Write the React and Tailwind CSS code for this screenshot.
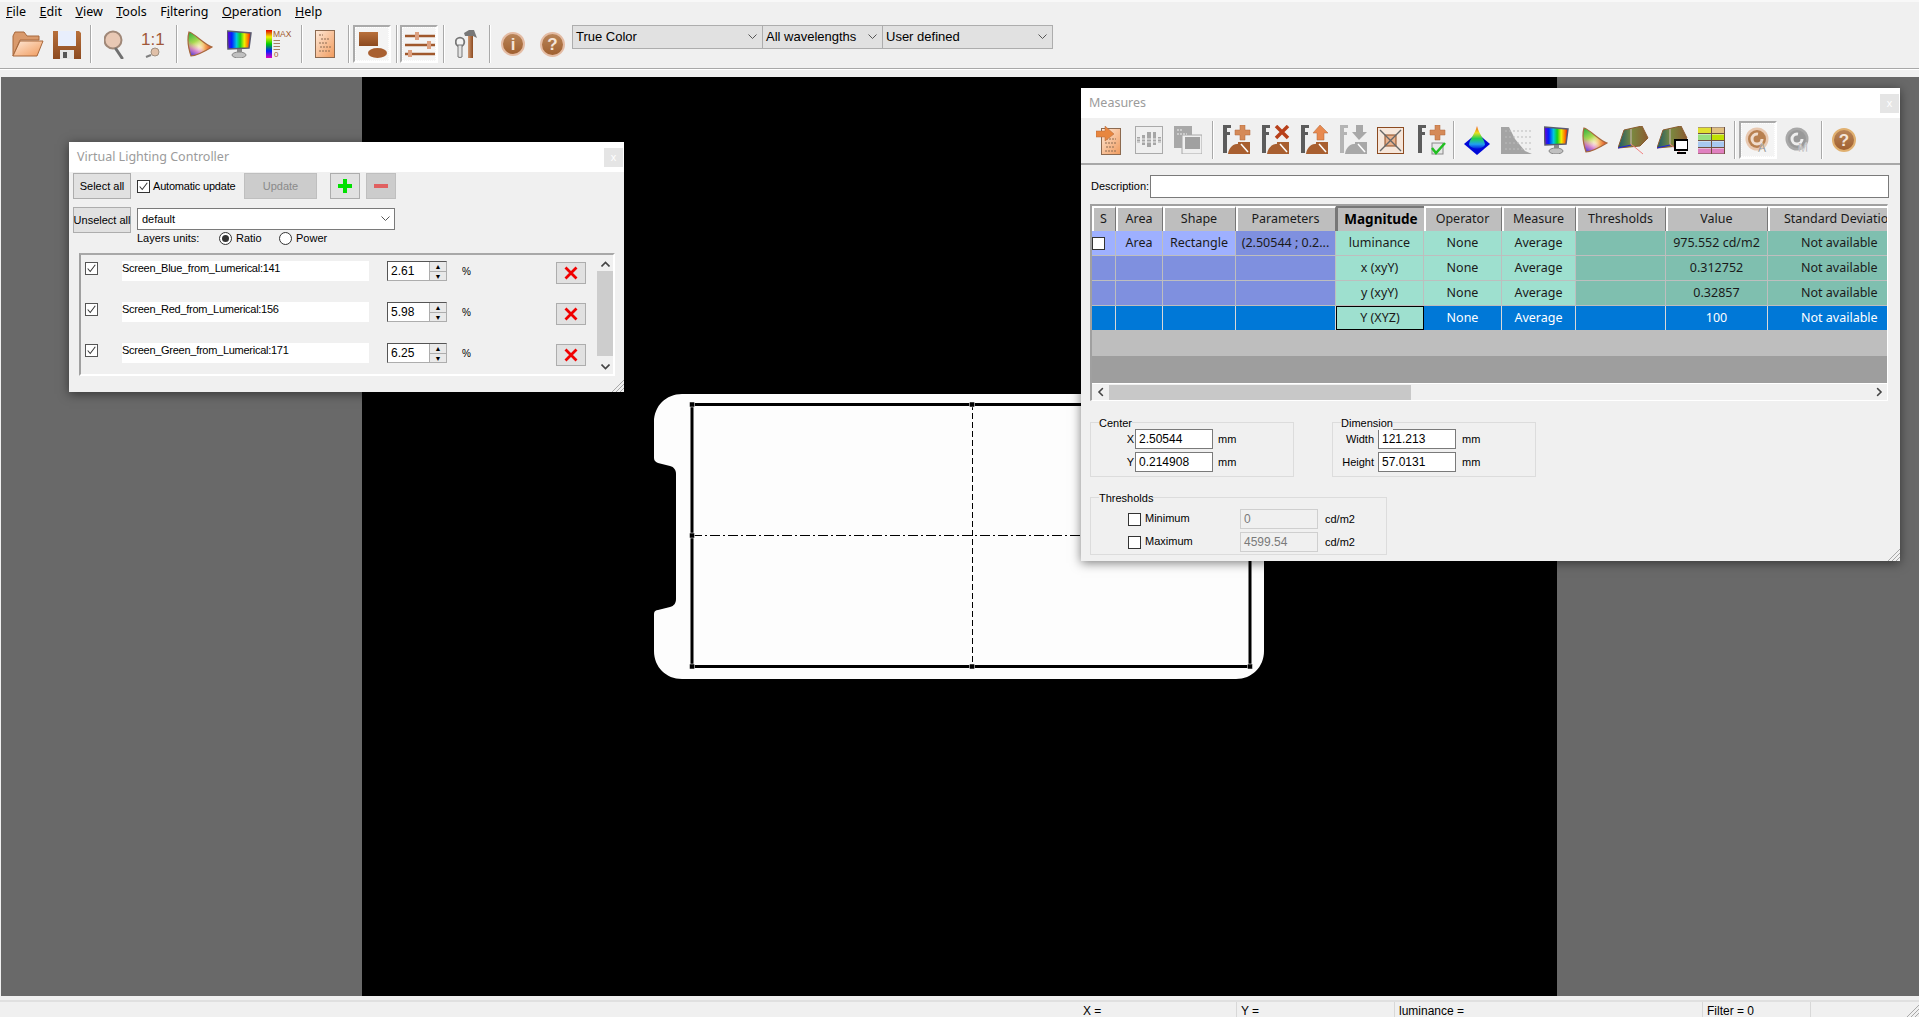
import React from "react";

const UI = "font-['Noto_Sans','Open_Sans',sans-serif]";
const ARIAL = "font-['Liberation_Sans',Arial,sans-serif]";

const Sep = () => <div className="w-[2px] h-[38px] bg-[#a9a9a9] border-r border-white shrink-0" />;

// shared gradients for the toolbar drawings
const GradientDefs = () => (
  <svg className="absolute w-0 h-0">
    <defs>
      <linearGradient id="peach" x1="0" y1="0" x2="1" y2="1">
        <stop offset="0" stopColor="#ffe9d8" />
        <stop offset="1" stopColor="#f09a5c" />
      </linearGradient>
      <linearGradient id="rust" x1="0" y1="0" x2="0" y2="1">
        <stop offset="0" stopColor="#b8703c" />
        <stop offset="1" stopColor="#8c4a20" />
      </linearGradient>
      <linearGradient id="spectrum" x1="0" y1="0" x2="1" y2="0">
        <stop offset="0" stopColor="#7a00c8" />
        <stop offset="0.2" stopColor="#0020ff" />
        <stop offset="0.4" stopColor="#00c8e0" />
        <stop offset="0.55" stopColor="#10d020" />
        <stop offset="0.72" stopColor="#f0f000" />
        <stop offset="0.88" stopColor="#ff7000" />
        <stop offset="1" stopColor="#e00000" />
      </linearGradient>
      <linearGradient id="vspectrum" x1="0" y1="0" x2="0" y2="1">
        <stop offset="0" stopColor="#e00000" />
        <stop offset="0.25" stopColor="#f0f000" />
        <stop offset="0.5" stopColor="#00d000" />
        <stop offset="0.75" stopColor="#0020ff" />
        <stop offset="1" stopColor="#e000c0" />
      </linearGradient>
      <linearGradient id="triG" x1="0.1" y1="0" x2="0.5" y2="0.7">
        <stop offset="0" stopColor="#30b040" />
        <stop offset="0.55" stopColor="#a8d850" />
        <stop offset="1" stopColor="#e8e060" stopOpacity="0" />
      </linearGradient>
      <linearGradient id="triR" x1="1" y1="0.62" x2="0.45" y2="0.6">
        <stop offset="0" stopColor="#d83020" />
        <stop offset="0.5" stopColor="#f09030" stopOpacity="0.8" />
        <stop offset="1" stopColor="#f0c040" stopOpacity="0" />
      </linearGradient>
      <linearGradient id="triB" x1="0.15" y1="1" x2="0.4" y2="0.55">
        <stop offset="0" stopColor="#3838d0" />
        <stop offset="0.5" stopColor="#c050c0" stopOpacity="0.7" />
        <stop offset="1" stopColor="#e080c0" stopOpacity="0" />
      </linearGradient>
      <linearGradient id="gamut3d" x1="0" y1="0" x2="1" y2="0">
        <stop offset="0" stopColor="#1a5a6a" />
        <stop offset="0.45" stopColor="#7a8a40" />
        <stop offset="1" stopColor="#8a5a30" />
      </linearGradient>
      <linearGradient id="cone" x1="0" y1="0" x2="0" y2="1">
        <stop offset="0" stopColor="#f05010" />
        <stop offset="0.3" stopColor="#e8e020" />
        <stop offset="0.55" stopColor="#20d050" />
        <stop offset="0.8" stopColor="#20a0f0" />
        <stop offset="1" stopColor="#0020e0" />
      </linearGradient>
      <linearGradient id="handle" x1="0" y1="0" x2="1" y2="0">
        <stop offset="0" stopColor="#d09870" />
        <stop offset="1" stopColor="#8c4a20" />
      </linearGradient>
    </defs>
  </svg>
);

const Svg = ({ w, h, children, className = "" }) => (
  <svg width={w} height={h} viewBox={`0 0 ${w} ${h}`} className={`shrink-0 ${className}`}>
    {children}
  </svg>
);

const FolderIcon = () => (
  <Svg w={32} h={26}>
    <path d="M1 25 L1 5 L3 1 L12 1 L15 5 L27 5 L27 9 L8 9 Z" fill="#d99a6c" stroke="#a8683c" />
    <path d="M1 25 L8 10 L31 10 L25 25 Z" fill="url(#peach)" stroke="#a8683c" />
  </Svg>
);
const SaveIcon = () => (
  <Svg w={28} h={29}>
    <path d="M0 1 H26 L28 3 V29 H0 Z" fill="url(#rust)" />
    <rect x="5" y="1" width="18" height="15" fill="#e8eefc" />
    <rect x="7" y="20" width="14" height="9" fill="#e6e6e6" />
    <rect x="10" y="22" width="4" height="6" fill="#555" />
  </Svg>
);
const LensIcon = () => (
  <Svg w={20} h={29}>
    <circle cx="9" cy="10" r="8.5" fill="#e8c8b4" stroke="#a08878" strokeWidth="2" />
    <path d="M12 19 L18 28" stroke="#707070" strokeWidth="3" strokeLinecap="round" />
  </Svg>
);
const OneOneIcon = () => (
  <Svg w={24} h={27}>
    <text x="0" y="14" fontSize="17" fill="#a0583a" fontFamily="Liberation Sans, sans-serif">1:1</text>
    <circle cx="14" cy="21" r="4" fill="#e0c0a8" stroke="#a09080" />
    <path d="M10 24 L5 26" stroke="#808080" strokeWidth="2" />
  </Svg>
);
const GamutTriangle = () => {
  const d = "M3 1 C8 2 19 14 26 16 C16 22 9 25 5 25 C2 16 1 8 3 1 Z";
  return (
    <Svg w={27} h={26}>
      <path d={d} fill="#fff8f0" />
      <path d={d} fill="url(#triG)" />
      <path d={d} fill="url(#triR)" />
      <path d={d} fill="url(#triB)" />
      <path d={d} fill="none" stroke="#a8683c" strokeWidth="1.2" />
    </Svg>
  );
};
const MonitorIcon = () => (
  <Svg w={25} h={28}>
    <path d="M0 1 L24 3 L22 18 L1 19 Z" fill="url(#spectrum)" stroke="#5a5a70" strokeWidth="1.5" />
    <rect x="10" y="19" width="5" height="3" fill="#888" />
    <ellipse cx="12" cy="25" rx="7" ry="3" fill="#c0c0c0" stroke="#888" />
  </Svg>
);
const MaxIcon = () => (
  <Svg w={28} h={28}>
    <rect x="0" y="0" width="6" height="28" fill="url(#vspectrum)" />
    <text x="7" y="7" fontSize="8.5" fill="#a0582c" fontFamily="Liberation Sans, sans-serif">MAX</text>
    <path d="M7.5 10.5 H14 M7.5 13.5 H14 M7.5 16.5 H14 M7.5 19.5 H14" stroke="#a88060" />
    <text x="8" y="27" fontSize="8" fill="#a0582c" fontFamily="Liberation Sans, sans-serif">0</text>
  </Svg>
);
const DocIcon = ({ w = 20, h = 28 }) => (
  <Svg w={w} h={h}>
    <rect x="0.5" y="0.5" width={w - 1} height={h - 1} fill="url(#peach)" stroke="#8c6a50" />
    <path d="M4 5 H8 M6 9 H15 M4 13 H12 M5 17 H16 M4 21 H15" stroke="#8c6a50" strokeDasharray="2 1" />
  </Svg>
);
const ShapesIcon = () => (
  <Svg w={30} h={30}>
    <rect x="2" y="3" width="19" height="14" fill="url(#rust)" />
    <ellipse cx="20.5" cy="24" rx="9.5" ry="5" fill="#a85f30" />
  </Svg>
);
const SlidersIcon = () => (
  <Svg w={32} h={26}>
    <path d="M2 5 H32 M2 14 H32 M2 23 H32" stroke="#a0582c" strokeWidth="2.6" />
    <rect x="12" y="1" width="4" height="8" fill="#dca080" />
    <rect x="24" y="10" width="4" height="8" fill="#dca080" />
    <rect x="5" y="19" width="4" height="7" fill="#dca080" />
  </Svg>
);
const ToolsIcon = () => (
  <Svg w={22} h={28}>
    <rect x="13" y="5" width="5" height="23" fill="url(#handle)" />
    <path d="M9 3 L14 0 H19 L22 8 L18 6 H10 Z" fill="#777" />
    <circle cx="5" cy="12" r="4.3" fill="#f4f4f4" stroke="#777" strokeWidth="1.8" />
    <path d="M3 15 H7 V27 Q5 28 3 27 Z" fill="#e4e4e4" stroke="#777" />
  </Svg>
);
const RoundIcon = ({ glyph, ring = "#e4bca4", size = 24 }) => (
  <span
    className={`${ARIAL} font-bold shrink-0 flex items-center justify-center rounded-full border-2 text-[#f4e4d8] text-[17px] leading-none`}
    style={{ width: size, height: size, borderColor: ring, background: "linear-gradient(#b88458,#a06030)" }}
  >
    {glyph}
  </span>
);

// measures tool: caliper + area shape + badge
const Caliper = ({ grey }) => {
  const c = grey ? "#b4b4b4" : "#5c5c5c";
  const s = grey ? "#a8a8a8" : "#a85f30";
  return (
    <>
      <path d="M2 0 H10 V3 H6 V7 H9 V10 H6 V28 H2 Z" fill={c} />
      <path d="M7 29 C8 21 14 18 20 19 V29 Z" fill={s} />
      <rect x="17" y="17" width="12" height="12" fill={s} />
      <path d="M20 19 L27 27" stroke="#fff" strokeWidth="1.5" />
    </>
  );
};
const Plus = ({ x = 14, y = 0, c = "#d58a58" }) => (
  <path transform={`translate(${x} ${y})`} d="M5 0 H10 V5 H15 V10 H10 V15 H5 V10 H0 V5 H5 Z" fill={c} stroke="#b0663a" strokeWidth="0.5" />
);
const AddMeasure = () => <Svg w={30} h={30}><Caliper /><Plus /></Svg>;
const DelMeasure = () => (
  <Svg w={30} h={30}><Caliper /><path d="M16 1 L28 13 M28 1 L16 13" stroke="#b8401a" strokeWidth="3.5" /></Svg>
);
const UpMeasure = () => (
  <Svg w={30} h={30}><Caliper /><path d="M21 0 L29 8 H25 V15 H18 V8 H14 Z" fill="#e88a50" stroke="#b0663a" strokeWidth="0.5" /></Svg>
);
const DownMeasure = () => (
  <Svg w={30} h={30}><Caliper grey /><path d="M18 0 H25 V7 H29 L21 15 L14 7 H18 Z" fill="#a8a8a8" /></Svg>
);
const ArrowsBox = () => (
  <Svg w={27} h={27}>
    <rect x="0.5" y="0.5" width="26" height="26" fill="#f6e6da" stroke="#8c4a20" />
    <rect x="8" y="8" width="11" height="11" fill="#eab18c" stroke="#8c4a20" />
    <path d="M3 3 L24 24 M24 3 L3 24" stroke="#666" strokeWidth="1.4" />
  </Svg>
);
const CheckMeasure = () => (
  <Svg w={30} h={30}>
    <path d="M2 0 H10 V3 H6 V7 H9 V10 H6 V28 H2 Z" fill="#5c5c5c" />
    <Plus />
    <rect x="16" y="18" width="11" height="11" fill="#e8e8e8" stroke="#888" />
    <path d="M16 23 L20 28 L29 18" stroke="#20c020" strokeWidth="2.5" fill="none" />
  </Svg>
);
const DocArrow = () => (
  <Svg w={25} h={29}>
    <rect x="5.5" y="2.5" width="19" height="26" fill="url(#peach)" stroke="#8c6a50" />
    <path d="M10 13 H20 M9 17 H21 M10 21 H19 M9 25 H21" stroke="#8c6a50" strokeDasharray="2 1" />
    <path d="M0 5 H9 V0 L18 8 L9 15 V11 H0 Z" fill="#e8863f" stroke="#b0663a" strokeWidth="0.5" />
  </Svg>
);
const GridGrey = () => (
  <Svg w={28} h={28}>
    <rect x="0.5" y="0.5" width="27" height="27" fill="#efefef" stroke="#aaa" />
    <path d="M2 11 H5 V17 H2 Z M7 9 H10 V19 H7 Z M12 6 H16 V21 H12 Z M18 6 H21 V19 H18 Z M23 11 H26 V17 H23 Z" fill="#a6a6a6" />
    <path d="M1 13 H27 M1 16 H27" stroke="#efefef" />
  </Svg>
);
const CopyGrey = () => (
  <Svg w={28} h={28}>
    <rect x="0" y="0" width="18" height="22" fill="#a8a8a8" />
    <rect x="8" y="9" width="20" height="19" fill="#efefef" stroke="#a8a8a8" />
    <rect x="11" y="11" width="15" height="12" fill="#a0a0a0" />
    <path d="M3 4 H9 M3 8 H13" stroke="#eee" strokeDasharray="2 1" />
  </Svg>
);
const Cone = () => (
  <Svg w={26} h={29}>
    <path d="M0 18 L13 29 L26 18 L13 7 Z" fill="#0008d8" />
    <path d="M13 0 C15 8 21 14 21 19 C17 24 9 24 5 19 C5 14 11 8 13 0 Z" fill="url(#cone)" />
  </Svg>
);
const HistGrey = () => (
  <Svg w={31} h={27}>
    <path d="M0 27 V0 H8 L14 12 L24 24 L31 27 Z" fill="#a4a4a4" />
    <path d="M4 4 H31 M4 10 H31 M4 16 H31 M4 22 H31" stroke="#bbb" strokeDasharray="2 2" />
  </Svg>
);
const Gamut3D = () => (
  <>
    <path d="M6 4 L24 0 L30 12 L22 20 L0 22 Z" fill="url(#gamut3d)" stroke="#8a5a30" />
    <path d="M13 3 V19" stroke="#b0a890" strokeWidth="1.5" />
    <path d="M13 18 L25 28" stroke="#f08080" />
    <path d="M0 22 L13 19" stroke="#2020e0" />
  </>
);
const GamutMonitor = () => (
  <Svg w={31} h={29}>
    <Gamut3D />
    <rect x="18" y="14" width="13" height="10" fill="#fff" stroke="#000" strokeWidth="2" />
    <path d="M20 27 H29" stroke="#000" strokeWidth="2" />
  </Svg>
);
const TableIcon = () => (
  <Svg w={27} h={27}>
    {[
      ["#e0e030", "#e0c080", 0],
      ["#98e080", "#c0e000", 1],
      ["#a8c8f0", "#a8c8f0", 2],
      ["#e080c0", "#e080c0", 3],
    ].map(([a, b, i]) => (
      <g key={i}>
        <rect x="0" y={i * 7 + 0.5} width="13" height="5.5" fill={a} />
        <rect x="14" y={i * 7 + 0.5} width="12" height="5.5" fill={b} />
      </g>
    ))}
    <path d="M0 0 H27 M0 6.5 H27 M0 13.5 H27 M0 20.5 H27 M0 27 H27 M13.5 0 V27 M26.5 0 V27" stroke="#705040" />
  </Svg>
);
const AutoIcon = ({ letter, grey }) => (
  <Svg w={26} h={28}>
    <circle cx="12" cy="13" r="11.5" fill={grey ? "#a8a8a8" : "#e8c8b0"} />
    <circle cx="12" cy="13" r="9" fill={grey ? "#999" : "#b88050"} />
    <circle cx="12" cy="13" r="5" fill="none" stroke={grey ? "#eee" : "#f0dccc"} strokeWidth="3" strokeDasharray="24 8" />
    <text x="13" y="26" fontSize="12" fill={grey ? "#999" : "#555"} stroke="#fff" strokeWidth="0.3" fontFamily="Liberation Sans, sans-serif">{letter}</text>
  </Svg>
);

const Check = ({ checked, className = "" }) => (
  <span className={`w-[13px] h-[13px] shrink-0 block bg-white border border-[#333] ${className}`}>
    {checked && (
      <svg viewBox="0 0 13 13" className="w-full h-full">
        <path d="M2 6.5 L5 10 L11 2" fill="none" stroke="#333" strokeWidth="1.2" />
      </svg>
    )}
  </span>
);

const Radio = ({ on }) => (
  <span className="w-[13px] h-[13px] rounded-full bg-white border border-[#333] flex items-center justify-center shrink-0">
    {on && <span className="w-[7px] h-[7px] rounded-full bg-[#333]" />}
  </span>
);

const Chevron = ({ className = "", strong }) => (
  <svg width="9" height="6" viewBox="0 0 9 6" className={className}>
    <path d="M0.5 0.5 L4.5 4.5 L8.5 0.5" fill="none" stroke={strong ? "#444" : "#555"} strokeWidth={strong ? 1.6 : 1} />
  </svg>
);

const Combo = ({ label, w }) => (
  <div className={`${w} h-[24px] -ml-px first:ml-0 bg-[#e1e1e1] border border-[#adadad] flex items-center justify-between pl-[3px] pr-[5px] ${ARIAL} text-[13px] text-black`}>
    <span>{label}</span>
    <Chevron />
  </div>
);

const CheckedButton = ({ children, className = "" }) => (
  <div className={`w-[38px] h-[38px] border-2 border-[#aaa] border-r-white border-b-white bg-[#f4f4f4] shrink-0 ${className}`}>
    <div className="w-full h-full flex items-center justify-center border border-dotted border-white">{children}</div>
  </div>
);

function MainToolbar() {
  return (
    <div className="h-[44px] flex items-start bg-[#f0f0f0]">
      <div className="h-[40px] flex items-center">
        <div className="w-[12px]" />
        <FolderIcon />
        <div className="w-[9px]" />
        <SaveIcon />
        <div className="w-[9px]" />
        <Sep />
        <div className="w-[12px]" />
        <LensIcon />
        <div className="w-[17px]" />
        <OneOneIcon />
        <div className="w-[11px]" />
        <Sep />
        <div className="w-[8px]" />
        <GamutTriangle />
        <div className="w-[14px]" />
        <MonitorIcon />
        <div className="w-[14px]" />
        <MaxIcon />
        <div className="w-[7px]" />
        <Sep />
        <div className="w-[12px]" />
        <DocIcon />
        <div className="w-[13px]" />
        <Sep />
        <div className="w-[3px]" />
        <CheckedButton><ShapesIcon /></CheckedButton>
        <div className="w-[5px]" />
        <Sep />
        <div className="w-[2px]" />
        <CheckedButton><SlidersIcon /></CheckedButton>
        <div className="w-[5px]" />
        <Sep />
        <div className="w-[10px]" />
        <ToolsIcon />
        <div className="w-[12px]" />
        <Sep />
        <div className="w-[10px]" />
        <RoundIcon glyph="i" size={24} />
        <div className="w-[15px]" />
        <RoundIcon glyph="?" size={25} />
        <div className="w-[7px]" />
      </div>
      <div className="flex mt-px">
        <Combo label="True Color" w="w-[191px]" />
        <Combo label="All wavelengths" w="w-[121px]" />
        <Combo label="User defined" w="w-[171px]" />
      </div>
    </div>
  );
}

function MenuBar() {
  const items = [
    ["", "F", "ile"],
    ["", "E", "dit"],
    ["", "V", "iew"],
    ["", "T", "ools"],
    ["F", "i", "ltering"],
    ["", "O", "peration"],
    ["", "H", "elp"],
  ];
  return (
    <div className={`h-[24px] pb-[2px] pl-[6px] flex items-center gap-[13.5px] bg-[#f0f0f0] border-t-2 border-[#f8f8f8] ${UI} text-[12.5px] text-black`}>
      {items.map(([a, u, b]) => (
        <span key={a + u + b}>{a}<span className="underline">{u}</span>{b}</span>
      ))}
    </div>
  );
}

function Titlebar({ title }) {
  return (
    <div className="h-[30px] bg-white flex items-center justify-between pl-[8px] pr-[1px] shrink-0">
      <span className={`${UI} pt-px text-[12.5px] text-[#9b9b9b]`}>{title}</span>
      <span className={`w-[19px] h-[19px] bg-[#e5e5e5] text-white text-[11px] leading-none flex items-center justify-center ${ARIAL}`}>x</span>
    </div>
  );
}

const Grip = () => (
  <svg width="12" height="12" viewBox="0 0 12 12" className="absolute right-0 bottom-0">
    <path d="M0 12 L12 0 M4 12 L12 4 M8 12 L12 8" stroke="#a8a8a8" />
  </svg>
);

const layers = [
  ["Screen_Blue_from_Lumerical:141", "2.61"],
  ["Screen_Red_from_Lumerical:156", "5.98"],
  ["Screen_Green_from_Lumerical:171", "6.25"],
];

function LayerRow({ name, value }) {
  return (
    <div className="h-[41px] flex items-start pt-[6px] shrink-0">
      <Check checked className="ml-[4px] mt-px border-[#555]" />
      <div className="w-[247px] h-[20px] ml-[24px] bg-white leading-[14px] text-[11px] tracking-[-0.27px] text-black">{name}</div>
      <div className="w-[60px] h-[20px] ml-[18px] flex border border-[#adadad] border-l-[#555] border-t-[#555]">
        <span className="w-[41px] h-full bg-white pl-[3px] text-[12px] leading-[18px]">{value}</span>
        <span className="flex-1 flex flex-col bg-[#e9e9e9] border-l border-[#adadad]">
          <span className="flex-1 text-[7px] leading-[9px] text-center">▲</span>
          <span className="flex-1 text-[7px] leading-[9px] text-center border-t border-[#adadad]">▼</span>
        </span>
      </div>
      <span className="w-[9px] ml-[15px] mt-[3px] text-[10px]">%</span>
      <button className="w-[30px] h-[22px] ml-[85px] mt-[1px] bg-[#e1e1e1] border border-[#adadad] flex items-center justify-center">
        <svg width="14" height="14" viewBox="0 0 14 14">
          <path d="M1.5 1.5 L12.5 12.5 M12.5 1.5 L1.5 12.5" stroke="#f00000" strokeWidth="2.8" />
        </svg>
      </button>
    </div>
  );
}

function LightingWindow() {
  const btn = "w-[58px] h-[26px] bg-[#e1e1e1] border border-[#adadad] text-[11px] text-black flex items-center justify-center whitespace-nowrap shrink-0";
  return (
    <div className={`absolute left-[69px] top-[65px] w-[555px] h-[250px] bg-[#f0f0f0] shadow-[0_2px_10px_rgba(0,0,0,0.5)] flex flex-col ${ARIAL}`}>
      <Titlebar title="Virtual Lighting Controller" />
      <div className="flex items-center h-[27px] pl-[4px] pt-px">
        <button className={`${btn} border-[#7d9cb8]`}>Select all</button>
        <Check checked className="ml-[6px]" />
        <span className="ml-[3px] w-[91px] text-[11px] tracking-[-0.2px]">Automatic update</span>
        <button className="w-[73px] h-[26px] bg-[#cccccc] border border-[#bfbfbf] text-[11px] text-[#8a8a8a]">Update</button>
        <button className="w-[30px] h-[26px] ml-[13px] bg-[#e1e1e1] border border-[#adadad] flex items-center justify-center">
          <svg width="14" height="14" viewBox="0 0 14 14"><path d="M5 0 H9 V5 H14 V9 H9 V14 H5 V9 H0 V5 H5 Z" fill="#00e000" /></svg>
        </button>
        <button className="w-[30px] h-[26px] ml-[6px] bg-[#cccccc] border border-[#bfbfbf] flex items-center justify-center">
          <span className="block w-[14px] h-[4px] bg-[#e06060]" />
        </button>
      </div>
      <div className="flex h-[25px] pl-[4px] mt-[8px]">
        <button className={btn}>Unselect all</button>
        <div className="w-[258px] h-[22px] ml-[6px] mt-px bg-white border border-[#7a7a7a] flex items-center justify-between pl-[4px] pr-[4px] text-[11px]">
          <span>default</span>
          <Chevron />
        </div>
      </div>
      <div className="flex items-center h-[14px] -mt-px pl-[68px] text-[11px]">
        <span className="w-[82px]">Layers units:</span>
        <Radio on />
        <span className="ml-[4px] w-[43px]">Ratio</span>
        <Radio />
        <span className="ml-[4px]">Power</span>
      </div>
      <div className="ml-[10px] mt-[8px] w-[536px] h-[123px] flex border-2 border-[#a8a8a8] border-r-white border-b-white border-l-[#a0a0a0]">
        <div className="flex-1 flex flex-col overflow-hidden">
          {layers.map(([name, value]) => <LayerRow key={name} name={name} value={value} />)}
        </div>
        <div className="w-[16px] flex flex-col items-center bg-[#f0f0f0] shrink-0">
          <Chevron strong className="mt-[6px] rotate-180" />
          <div className="w-full h-[85px] mt-[4px] bg-[#cdcdcd]" />
          <Chevron strong className="mt-[8px]" />
        </div>
      </div>
      <Grip />
    </div>
  );
}

const columns = [
  ["S", "w-[24px]"],
  ["Area", "w-[47px]"],
  ["Shape", "w-[73px]"],
  ["Parameters", "w-[100px]"],
  ["Magnitude", "w-[88px]"],
  ["Operator", "w-[78px]"],
  ["Measure", "w-[74px]"],
  ["Thresholds", "w-[90px]"],
  ["Value", "w-[102px]"],
  ["Standard Deviation", "w-[145px]"],
];

const BLUE1 = "bg-[#9eb0ff]";
const BLUE2 = "bg-[#7f90df]";
const MINT1 = "bg-[#9ee0cf]";
const MINT2 = "bg-[#7fbfaf]";

const rows = [
  [["", BLUE1], ["Area", BLUE1], ["Rectangle", BLUE1], ["(2.50544 ; 0.2...", BLUE2], ["luminance", MINT1], ["None", MINT1], ["Average", MINT1], ["", MINT2], ["975.552 cd/m2", MINT2], ["Not available", MINT2]],
  [["", BLUE2], ["", BLUE2], ["", BLUE2], ["", BLUE2], ["x (xyY)", MINT1], ["None", MINT1], ["Average", MINT1], ["", MINT2], ["0.312752", MINT2], ["Not available", MINT2]],
  [["", BLUE2], ["", BLUE2], ["", BLUE2], ["", BLUE2], ["y (xyY)", MINT1], ["None", MINT1], ["Average", MINT1], ["", MINT2], ["0.32857", MINT2], ["Not available", MINT2]],
];
const lastRow = ["", "", "", "", "Y (XYZ)", "None", "Average", "", "100", "Not available"];

// the last column runs past the visible area, its text sits at a fixed place
const lastCell = "justify-start pl-[33px]";

function MeasureTable() {
  return (
    <div className={`ml-[9px] mt-[6px] w-[798px] h-[197px] border-t-2 border-l-2 border-r border-b border-[#a0a0a0] border-r-white border-b-white overflow-hidden flex flex-col bg-[#bebebe] ${UI} text-[12.5px] text-[#1a1a1a]`}>
      <div className="flex h-[25px] shrink-0">
        {columns.map(([label, w]) =>
          label === "Magnitude" ? (
            <div key={label} className={`${w} shrink-0 border-2 border-[#777] border-r-0 border-b-0 bg-[#bebebe] font-bold text-[13.5px] flex items-center justify-center whitespace-nowrap overflow-hidden text-black`}>{label}</div>
          ) : (
            <div key={label} className={`${w} shrink-0 border-l-2 border-t-2 border-white bg-[#bebebe] border-r border-r-[#777] pr-[2px] flex items-center justify-center whitespace-nowrap overflow-hidden`}>{label}</div>
          )
        )}
      </div>
      {rows.map((cells, r) => (
        <div key={r} className="flex h-[25px] shrink-0">
          {cells.map(([text, bg], i) => (
            <div key={i} className={`${columns[i][1]} shrink-0 ${bg} border-r border-b border-[#bebebe] flex items-center whitespace-nowrap overflow-hidden ${i === 9 ? lastCell : i === 0 ? "justify-start" : "justify-center"}`}>
              {r === 0 && i === 0 ? <Check /> : text}
            </div>
          ))}
        </div>
      ))}
      <div className="flex h-[24px] shrink-0 bg-[#0078d7] text-white">
        {lastRow.map((text, i) =>
          i === 4 ? (
            <div key={i} className={`${columns[i][1]} shrink-0 ${MINT1} border border-black text-[#1a1a1a] flex items-center justify-center`}>{text}</div>
          ) : (
            <div key={i} className={`${columns[i][1]} shrink-0 border-r border-[#d8d8d8] flex items-center whitespace-nowrap ${i === 9 ? lastCell : "justify-center"}`}>{text}</div>
          )
        )}
      </div>
      <div className="h-[26px] shrink-0 bg-[#bebebe]" />
      <div className="h-[28px] shrink-0 bg-[#9e9e9e] border-b border-white" />
      <div className="flex-1 bg-[#f0f0f0] flex items-center">
        <Chevron strong className="rotate-90 ml-[4px] shrink-0" />
        <div className="w-[302px] h-[15px] ml-[4px] bg-[#c8c8c8] shrink-0" />
        <Chevron strong className="-rotate-90 ml-auto mr-[3px] shrink-0" />
      </div>
    </div>
  );
}

function Fieldset({ label, className, children }) {
  return (
    <div className={`relative border border-[#dcdcdc] ${className}`}>
      <span className="absolute left-[8px] -top-[7px] bg-[#f0f0f0] text-[11px] leading-[14px] text-black">{label}</span>
      {children}
    </div>
  );
}

const Field = ({ value, disabled, w = "w-[78px]" }) => (
  <div className={`${w} h-[20px] pl-[3px] text-[12px] leading-[18px] shrink-0 border ${disabled ? "bg-[#f0f0f0] border-[#cfcfcf] text-[#7a7a7a]" : "bg-white border-[#7a7a7a] text-black"}`}>{value}</div>
);

function MeasuresWindow() {
  // left margins come from the icon positions in the window
  const tools = [
    [<DocArrow />, ""],
    [<GridGrey />, "ml-[14px]"],
    [<CopyGrey />, "ml-[11px]"],
    [<Sep />, "ml-[10px]"],
    [<AddMeasure />, "ml-[7px]"],
    [<DelMeasure />, "ml-[9px]"],
    [<UpMeasure />, "ml-[9px]"],
    [<DownMeasure />, "ml-[9px]"],
    [<ArrowsBox />, "ml-[9px]"],
    [<CheckMeasure />, "ml-[12px]"],
    [<Sep />, "ml-[7px]"],
    [<Cone />, "ml-[9px]"],
    [<HistGrey />, "ml-[11px]"],
    [<MonitorIcon />, "ml-[12px]"],
    [<GamutTriangle />, "ml-[12px]"],
    [<Svg w={31} h={29}><Gamut3D /></Svg>, "ml-[10px]"],
    [<GamutMonitor />, "ml-[8px]"],
    [<TableIcon />, "ml-[10px]"],
    [<Sep />, "ml-[9px]"],
    [<CheckedButton><AutoIcon letter="A" /></CheckedButton>, "ml-[3px]"],
    [<AutoIcon letter="M" grey />, "ml-[8px]"],
    [<Sep />, "ml-[10px]"],
    [<RoundIcon glyph="?" ring="#e0b070" size={24} />, "ml-[9px]"],
  ];
  return (
    <div className={`absolute left-[1081px] top-[11px] w-[819px] h-[473px] bg-[#f0f0f0] shadow-[0_2px_10px_rgba(0,0,0,0.5)] flex flex-col ${ARIAL}`}>
      <Titlebar title="Measures" />
      <div className="h-[47px] shrink-0 flex items-center pl-[15px] pb-px border-b-2 border-b-[#a8a8a8]">
        {tools.map(([icon, ml], i) => <div key={i} className={`${ml} shrink-0 flex items-center`}>{icon}</div>)}
      </div>
      <div className="flex items-center h-[23px] mt-[10px] shrink-0 pl-[10px] pr-[11px] text-[11px]">
        <span className="w-[59px] -mt-px">Description:</span>
        <div className="h-[23px] flex-1 bg-white border border-[#7a7a7a]" />
      </div>
      <MeasureTable />
      <div className="flex pl-[9px] mt-[21px] text-[11px]">
        <Fieldset label="Center" className="w-[204px] h-[55px]">
          <div className="flex items-center ml-[35px] mt-[6px] gap-px">
            <span className="w-[8px] text-right">X</span>
            <Field value="2.50544" />
            <span className="ml-[4px]">mm</span>
          </div>
          <div className="flex items-center ml-[35px] mt-[3px] gap-px">
            <span className="w-[8px] text-right">Y</span>
            <Field value="0.214908" />
            <span className="ml-[4px]">mm</span>
          </div>
        </Fieldset>
        <Fieldset label="Dimension" className="w-[204px] h-[55px] ml-[38px]">
          <div className="flex items-center mt-[6px]">
            <span className="w-[41px] text-right mr-[4px]">Width</span>
            <Field value="121.213" />
            <span className="ml-[6px]">mm</span>
          </div>
          <div className="flex items-center mt-[3px]">
            <span className="w-[41px] text-right mr-[4px]">Height</span>
            <Field value="57.0131" />
            <span className="ml-[6px]">mm</span>
          </div>
        </Fieldset>
      </div>
      <div className="pl-[9px] mt-[20px] text-[11px]">
        <Fieldset label="Thresholds" className="w-[297px] h-[58px]">
          <div className="flex items-center pl-[37px] mt-[11px]">
            <Check />
            <span className="ml-[4px] w-[95px] -translate-y-px">Minimum</span>
            <Field value="0" disabled />
            <span className="ml-[7px]">cd/m2</span>
          </div>
          <div className="flex items-center pl-[37px] mt-[3px]">
            <Check />
            <span className="ml-[4px] w-[95px] -translate-y-px">Maximum</span>
            <Field value="4599.54" disabled />
            <span className="ml-[7px]">cd/m2</span>
          </div>
        </Fieldset>
      </div>
      <Grip />
    </div>
  );
}

// the measured picture: white screen outline with the measure rectangle on it
function ScreenPicture() {
  const handles = [[692, 404], [972, 404], [692, 535], [692, 666], [972, 666], [1250, 666], [1250, 404]];
  return (
    <svg width="1919" height="919" viewBox="0 77 1919 919" className="absolute left-0 top-0">
      <path
        d="M682 394 H1236 C1252 394 1264 406 1264 422 V651 C1264 667 1252 679 1236 679 H682 C666 679 654 667 654 651 V614 C654 611 656 610 658 610 L670 607 C674 606 676 603 676 599 V474 C676 470 674 467 670 466 L658 463 C656 462 654 461 654 458 V422 C654 406 666 394 682 394 Z"
        fill="#fdfdfd"
      />
      <rect x="692" y="404.5" width="558" height="262" fill="none" stroke="#000" strokeWidth="3" />
      <path d="M692 535.5 H1250" stroke="#000" strokeDasharray="10 3 2 3" />
      <path d="M972.5 404 V666" stroke="#000" strokeDasharray="6 3" />
      {handles.map(([x, y]) => (
        <rect key={x + "-" + y} x={x - 2.5} y={y - 2} width="5" height="5" fill="#000" stroke="#fff" strokeWidth="0.5" />
      ))}
    </svg>
  );
}

function StatusBar() {
  const cell = "h-full flex items-center border-r border-[#d8d8d8] pl-[4px] pt-[3px] shrink-0";
  return (
    <div className={`h-[17px] shrink-0 flex bg-[#f0f0f0] border-t-2 border-[#e0e0e0] relative ${ARIAL} text-[12px] text-black`}>
      <div className={`${cell} w-[1237px] pl-[1083px]`}>X =</div>
      <div className={`${cell} w-[158px]`}>Y =</div>
      <div className={`${cell} w-[308px]`}>luminance =</div>
      <div className={`${cell} w-[108px]`}>Filter = 0</div>
      <Grip />
    </div>
  );
}

export default function App() {
  return (
    <div className="w-[1919px] h-[1017px] flex flex-col overflow-hidden bg-[#f0f0f0]">
      <GradientDefs />
      <MenuBar />
      <MainToolbar />
      <div className="h-[2px] shrink-0 bg-[#a8a8a8] border-b border-white" />
      <div className="h-[7px] shrink-0" />
      <div className="h-[919px] shrink-0 relative overflow-hidden bg-[#696969] shadow-[inset_1px_0_0_#f0f0f0]">
        <div className="absolute left-[362px] top-0 w-[1195px] h-full bg-black" />
        <ScreenPicture />
        <LightingWindow />
        <MeasuresWindow />
      </div>
      <div className="h-[4px] shrink-0" />
      <StatusBar />
    </div>
  );
}
